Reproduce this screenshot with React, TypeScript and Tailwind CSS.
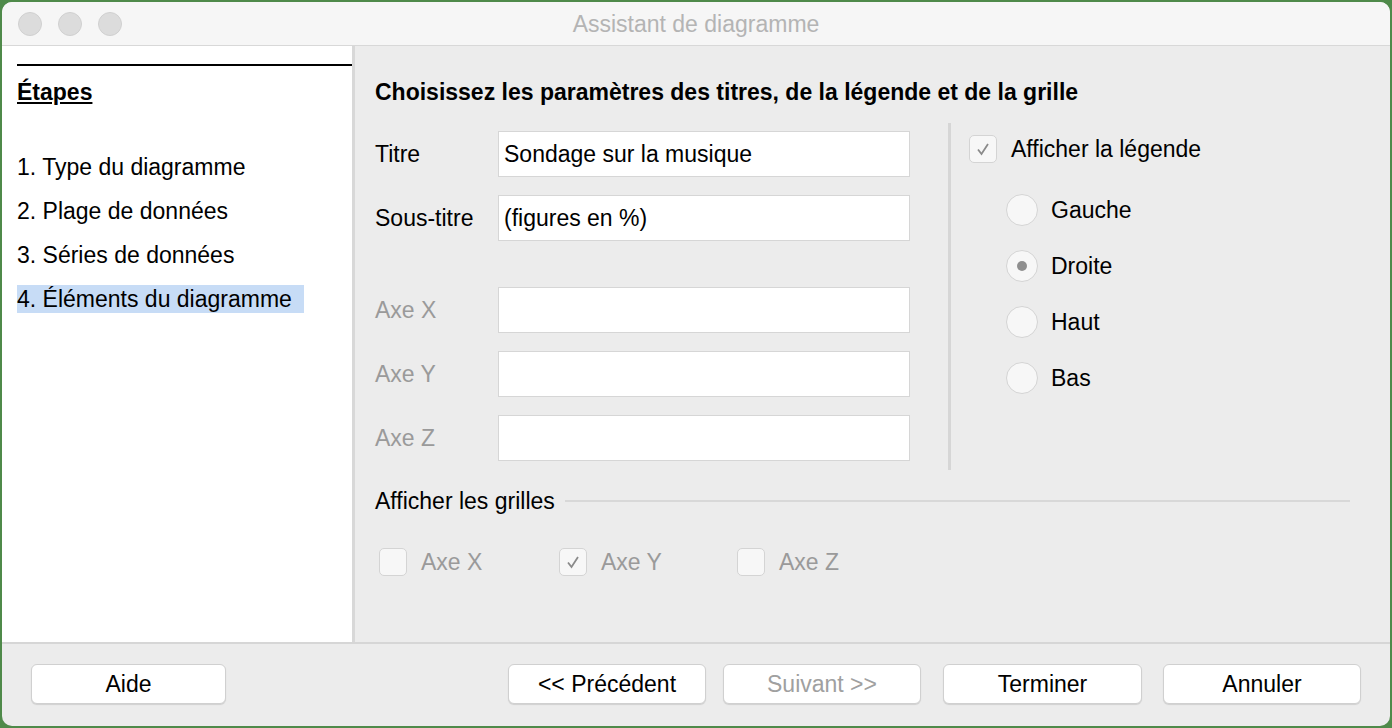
import React from "react";

const Check = ({ checked }: { checked?: boolean }) => (
  <div className="w-[28px] h-[28px] rounded-[5px] border border-[#d4d4d4] bg-[#f7f7f7] flex items-center justify-center">
    {checked && (
      <svg width="16" height="16" viewBox="0 0 16 16"><path d="M3 8.5 L6.5 13 L13 3" fill="none" stroke="#8a8a8a" strokeWidth="1.8" /></svg>
    )}
  </div>
);

const Radio = ({ on }: { on?: boolean }) => (
  <div className="w-[32px] h-[32px] rounded-full border border-[#d4d4d4] bg-[#f7f7f7] flex items-center justify-center">
    {on && <div className="w-[10px] h-[10px] rounded-full bg-[#8f8f8f]" />}
  </div>
);

const Field = ({ label, value, disabled }: { label: string; value?: string; disabled?: boolean }) => (
  <div className="flex items-center h-[46px]">
    <div className={`w-[123px] ${disabled ? "text-[#9a9a9a]" : "text-black"}`}>{label}</div>
    <div className="w-[412px] h-[46px] bg-white border border-[#d6d6d6] px-[5px] flex items-center">{value}</div>
  </div>
);

const Btn = ({ children, w, disabled }: { children: React.ReactNode; w: string; disabled?: boolean }) => (
  <div className={`${w} h-[40px] rounded-[6px] bg-white border border-[#d0d0d0] shadow-[0_1px_1px_rgba(0,0,0,0.12)] flex items-center justify-center ${disabled ? "text-[#a0a0a0]" : "text-black"}`}>{children}</div>
);

export default function App() {
  return (
    <div className="w-[1392px] h-[728px] bg-[#4f8a4a] p-[2px] text-[23px] leading-[28px]" style={{ fontFamily: '"Liberation Sans", Arial, sans-serif' }}>
      <div className="w-full h-full rounded-[10px] overflow-hidden bg-[#ececec] flex flex-col">
        <div className="h-[44px] shrink-0 bg-[#f6f6f6] border-b border-[#d8d8d8] flex items-center relative">
          <div className="flex gap-[16px] pl-[16px]">
            <div className="w-[24px] h-[24px] rounded-full bg-[#dcdcdc] border border-[#d0d0d0]" />
            <div className="w-[24px] h-[24px] rounded-full bg-[#dcdcdc] border border-[#d0d0d0]" />
            <div className="w-[24px] h-[24px] rounded-full bg-[#dcdcdc] border border-[#d0d0d0]" />
          </div>
          <div className="absolute inset-0 flex items-center justify-center text-[23px] text-[#b4b4b4]">Assistant de diagramme</div>
        </div>
        <div className="flex flex-1 min-h-0">
          <div className="w-[353px] shrink-0 bg-white border-r-[3px] border-[#d8d8d8] pl-[15px] pt-[18px]">
            <div className="border-t-2 border-black" />
            <div className="font-bold underline mt-[12px]">Étapes</div>
            <div className="mt-[47px] flex flex-col gap-[16px]">
              <div>1. Type du diagramme</div>
              <div>2. Plage de données</div>
              <div>3. Séries de données</div>
              <div className="bg-[#c7dcf6] w-[287px]">4. Éléments du diagramme</div>
            </div>
          </div>
          <div className="flex-1 pl-[20px] pr-[40px] pt-[32px] flex flex-col">
            <div className="font-bold">Choisissez les paramètres des titres, de la légende et de la grille</div>
            <div className="flex mt-[25px]">
              <div className="flex flex-col">
                <Field label="Titre" value="Sondage sur la musique" />
                <div className="h-[18px]" />
                <Field label="Sous-titre" value="(figures en %)" />
                <div className="h-[46px]" />
                <Field label="Axe X" disabled />
                <div className="h-[18px]" />
                <Field label="Axe Y" disabled />
                <div className="h-[18px]" />
                <Field label="Axe Z" disabled />
              </div>
              <div className="ml-[38px] mt-[-8px] h-[347px] border-l-[3px] border-[#d6d6d6] pl-[18px] pt-[12px]">
                <div className="flex items-center gap-[14px]"><Check checked /><span>Afficher la légende</span></div>
                <div className="pl-[37px] mt-[31px] flex flex-col gap-[24px]">
                  {["Gauche", "Droite", "Haut", "Bas"].map((t) => (
                    <div key={t} className="flex items-center gap-[13px]"><Radio on={t === "Droite"} /><span>{t}</span></div>
                  ))}
                </div>
              </div>
            </div>
            <div className="flex items-center mt-[17px]">
              <span>Afficher les grilles</span>
              <div className="flex-1 ml-[10px] border-t-2 border-[#d8d8d8]" />
            </div>
            <div className="flex items-center mt-[33px] pl-[4px] text-[#9a9a9a]">
              <div className="flex items-center gap-[14px] w-[180px]"><Check /><span>Axe X</span></div>
              <div className="flex items-center gap-[14px] w-[178px]"><Check checked /><span>Axe Y</span></div>
              <div className="flex items-center gap-[14px]"><Check /><span>Axe Z</span></div>
            </div>
          </div>
        </div>
        <div className="h-[84px] shrink-0 border-t-2 border-[#d6d6d6] flex items-center px-[29px] pb-[2px]">
          <Btn w="w-[198px]">Aide</Btn>
          <div className="ml-[282px]"><Btn w="w-[198px]">&lt;&lt; Précédent</Btn></div>
          <div className="ml-[17px]"><Btn w="w-[198px]" disabled>Suivant &gt;&gt;</Btn></div>
          <div className="ml-[22px]"><Btn w="w-[199px]">Terminer</Btn></div>
          <div className="ml-[21px]"><Btn w="w-[198px]">Annuler</Btn></div>
        </div>
      </div>
    </div>
  );
}
